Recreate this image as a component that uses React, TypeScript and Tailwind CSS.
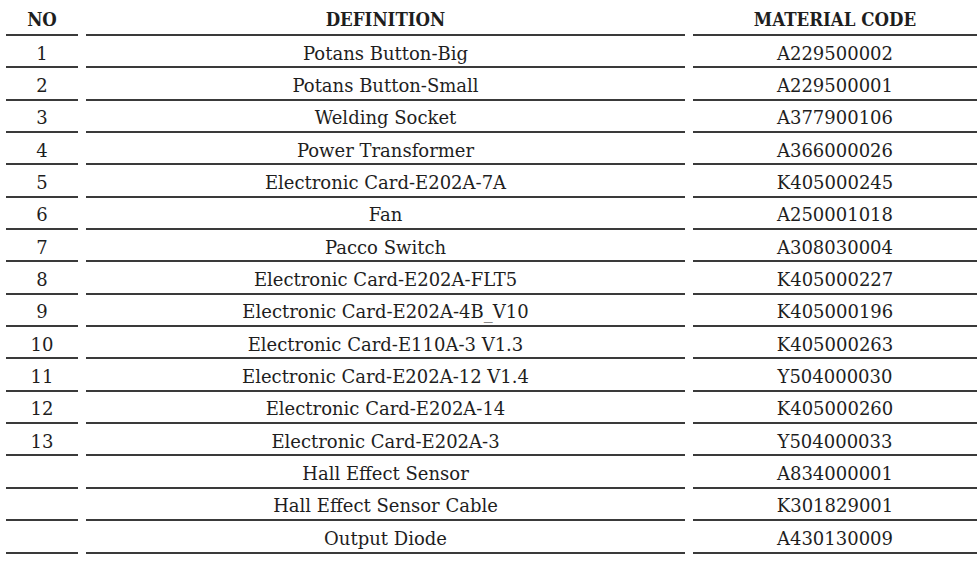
const rows: [string, string, string][] = [
  ['1', 'Potans Button-Big', 'A229500002'],
  ['2', 'Potans Button-Small', 'A229500001'],
  ['3', 'Welding Socket', 'A377900106'],
  ['4', 'Power Transformer', 'A366000026'],
  ['5', 'Electronic Card-E202A-7A', 'K405000245'],
  ['6', 'Fan', 'A250001018'],
  ['7', 'Pacco Switch', 'A308030004'],
  ['8', 'Electronic Card-E202A-FLT5', 'K405000227'],
  ['9', 'Electronic Card-E202A-4B_V10', 'K405000196'],
  ['10', 'Electronic Card-E110A-3 V1.3', 'K405000263'],
  ['11', 'Electronic Card-E202A-12 V1.4', 'Y504000030'],
  ['12', 'Electronic Card-E202A-14', 'K405000260'],
  ['13', 'Electronic Card-E202A-3', 'Y504000033'],
  ['', 'Hall Effect Sensor', 'A834000001'],
  ['', 'Hall Effect Sensor Cable', 'K301829001'],
  ['', 'Output Diode', 'A430130009'],
];

const cell = 'flex items-center justify-center border-b-2 border-[#3a3a3a] h-[32.35px] pt-[4px]';
const head =
  'flex items-center justify-center border-b-2 border-[#3a3a3a] h-[36px] pt-[6px] font-bold text-[18.5px] [font-family:"DejaVu_Serif_Condensed","DejaVu_Serif",serif]';

export default function App() {
  return (
    <div
      className="w-[977px] h-[561px] bg-white text-[#1e1e1e] text-[18px] pl-[6px]"
      style={{ fontFamily: '"DejaVu Serif", serif' }}
    >
      <div className="grid grid-cols-[72px_599px_284px] gap-x-[8px]">
        <div className={head}>NO</div>
        <div className={head}>DEFINITION</div>
        <div className={head}>MATERIAL CODE</div>
        {rows.map(([no, def, code], i) => (
          <div key={i} className="contents">
            <div className={cell}>{no}</div>
            <div className={cell}>{def}</div>
            <div className={cell}>{code}</div>
          </div>
        ))}
      </div>
    </div>
  );
}
